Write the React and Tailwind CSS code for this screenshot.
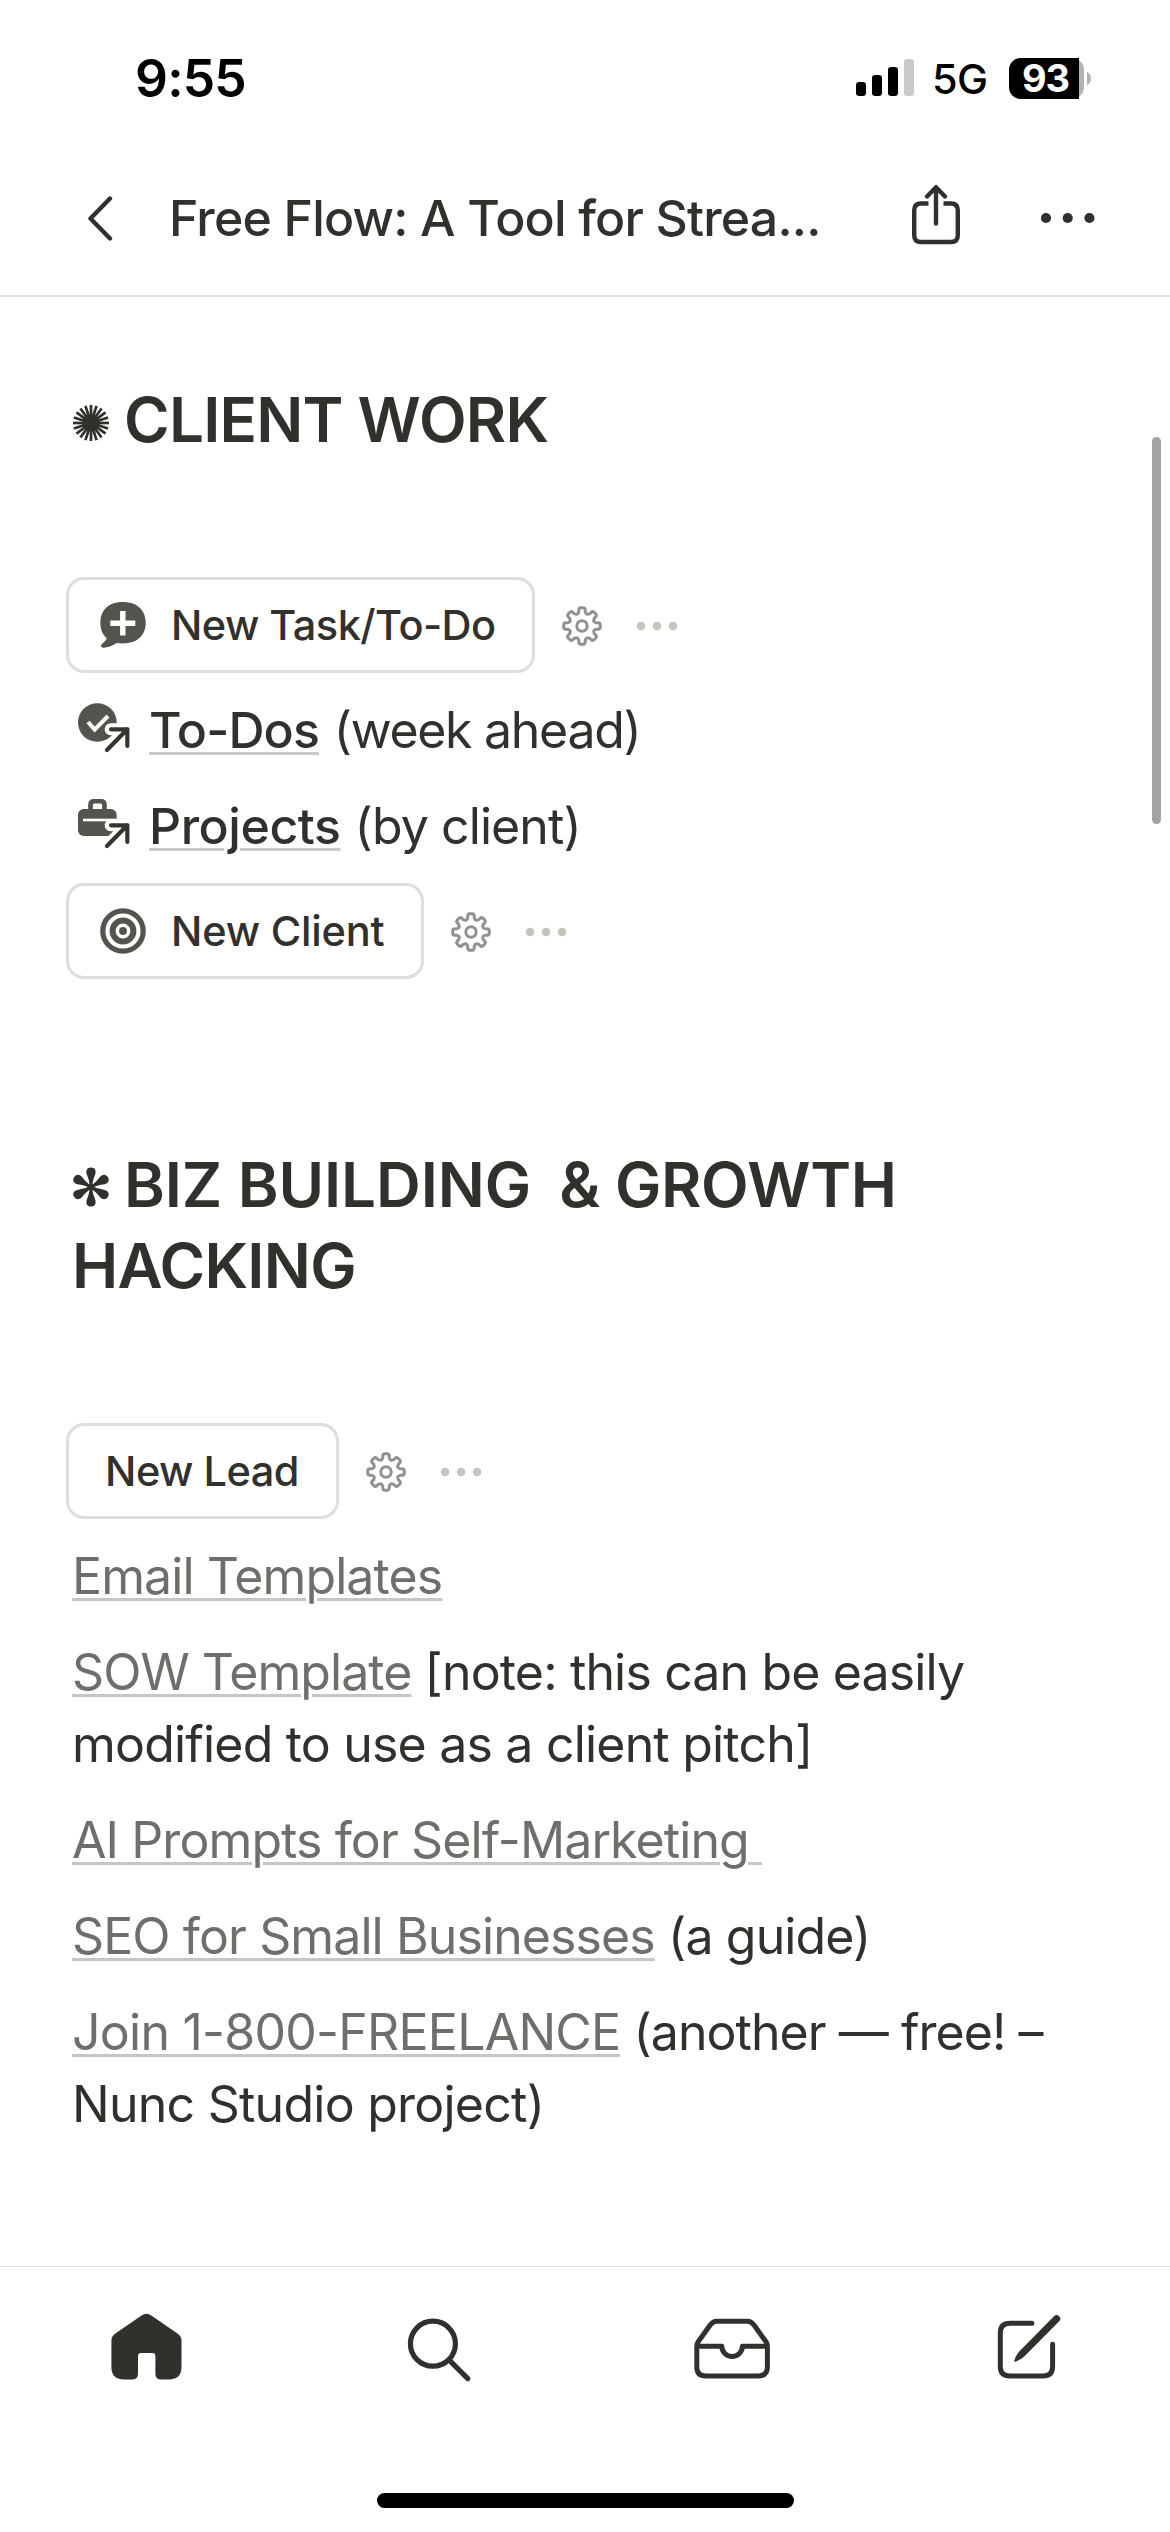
import React from 'react';

const StatusBar = () => (
    <div className="h-[156px] shrink-0 flex items-center justify-between pl-[135px] pr-[79px] text-black">
        <span className="text-[51.5px] leading-none font-semibold tracking-[-0.8px] mt-[2px]">9:55</span>
        <div className="flex items-center">
            <svg width="58" height="38" viewBox="0 0 58 38" className="mr-[18px]">
                <rect x="0" y="23" width="10" height="14" rx="3.2" />
                <rect x="16" y="16" width="10" height="21" rx="3.2" />
                <rect x="32" y="8" width="10" height="29" rx="3.2" />
                <rect x="48" y="0" width="10" height="37" rx="3.2" fill="#cacaca" />
            </svg>
            <span className="text-[41.5px] leading-none font-medium tracking-[-0.6px] mt-[3px] w-[60px]">5G</span>
            <div className="flex items-center ml-[17px]">
                <div className="w-[75px] h-[41px] rounded-[12px] flex items-center bg-[#b3b3b3]">
                    <div className="w-[70px] h-[41px] rounded-l-[12px] bg-black text-white text-[38px] leading-[41px] font-bold tracking-[-1px] text-center pl-[3px]">93</div>
                </div>
                <svg width="4" height="13" viewBox="0 0 4 13" className="ml-[3px]">
                    <path d="M0 0C2.6 1.2 4 3.6 4 6.5S2.6 11.8 0 13Z" fill="#b3b3b3" />
                </svg>
            </div>
        </div>
    </div>
);

const Header = () => (
    <div className="h-[141px] shrink-0 flex items-center pb-[15px] border-b-2 border-[#e3e4df] pl-[86px]">
        <svg width="28" height="46" viewBox="0 0 28 46" fill="none" stroke="#32302c" strokeWidth="4.4" strokeLinecap="round" strokeLinejoin="round">
            <path d="M24 3.5L4.5 23.5L24 43.5" />
        </svg>
        <h1 className="ml-[55px] w-[660px] text-[50px] leading-[60px] font-medium tracking-[-0.81px] whitespace-nowrap">Free Flow: A Tool for Strea...</h1>
        <svg width="52" height="62" viewBox="0 0 52 62" className="ml-[81px] -mt-[7px]" fill="none" stroke="#32302c" strokeWidth="4.4" strokeLinecap="round" strokeLinejoin="round">
            <path d="M18.5 19.5H11Q4.2 19.5 4.2 26.3V51.2Q4.2 58 11 58H41Q47.8 58 47.8 51.2V26.3Q47.8 19.5 41 19.5H33.5" strokeLinecap="butt" />
            <path d="M26 39.5V3.5M17 12.5L26 3.2L35 12.5" />
        </svg>
        <svg width="56" height="12" viewBox="0 0 56 12" className="ml-[78px]" fill="#32302c">
            <circle cx="6" cy="6" r="5.1" />
            <circle cx="27.7" cy="6" r="5.1" />
            <circle cx="49.4" cy="6" r="5.1" />
        </svg>
    </div>
);

const point = (radius, deg) => {
    const a = (deg * Math.PI) / 180;
    return `${(20 + radius * Math.sin(a)).toFixed(2)} ${(20 - radius * Math.cos(a)).toFixed(2)}`;
};

const gearPath = Array.from({ length: 8 }, (_, i) => {
    const a = i * 45;
    return `${i ? 'L' : 'M'}${point(16.4, a - 11)}Q${point(18.2, a - 10)} ${point(18.3, a - 5)}L${point(18.3, a + 5)}Q${point(18.2, a + 10)} ${point(16.4, a + 11)}L${point(14.4, a + 13.5)}Q${point(11.4, a + 22.5)} ${point(14.4, a + 31.5)}`;
}).join('') + 'Z';

const Gear = () => (
    <svg width="40" height="40" viewBox="0 0 40 40" fill="none" stroke="#91918e" strokeWidth="3" strokeLinejoin="round">
        <path d={gearPath} />
        <circle cx="20" cy="20" r="5.2" />
    </svg>
);

const BubbleIcon = () => (
    <svg width="46" height="46" viewBox="0 0 46 46">
        <path d="M22.8 0C37.5 0 45.7 8.5 45.7 20.8C45.7 33.2 37.5 41.5 22.8 41.5C20.6 41.5 18.6 41.3 16.8 41C13 43.6 8 45.8 3.2 45.7C.8 45.6.3 43.4 2 42C4.3 40.2 6.2 38 6.8 36.3C2.5 32.8.4 27.5.4 20.8C.4 8.5 8.2 0 22.8 0Z" fill="#55534e" />
        <path d="M22.8 9V33.4M10.3 21.2H35.3" stroke="#fff" strokeWidth="5.4" />
    </svg>
);

const TargetIcon = () => (
    <svg width="46" height="46" viewBox="0 0 46 46" fill="none" stroke="#55534e">
        <circle cx="23" cy="23" r="20.2" strokeWidth="5.2" />
        <circle cx="23" cy="23" r="10.4" strokeWidth="6" />
        <circle cx="23" cy="23" r="3.9" fill="#55534e" stroke="none" />
    </svg>
);

const LinkArrow = () => (
    <g fill="none" strokeLinecap="round" strokeLinejoin="round">
        <path d="M98 79H149V128M149 79L86 142" stroke="#fff" strokeWidth="36" />
        <path d="M99 79H148V129M148 79L87 141" stroke="#373530" strokeWidth="12.5" />
    </g>
);

const CheckIcon = () => (
    <svg width="52" height="50" viewBox="0 0 156 150" className="shrink-0 mt-[9px] ml-[6px] mr-[19px]">
        <circle cx="58" cy="58.5" r="58" fill="#55534e" />
        <path d="M30 57L50 80L90 39" fill="none" stroke="#fff" strokeWidth="12" />
        <LinkArrow />
    </svg>
);

const BriefcaseIcon = () => (
    <svg width="52" height="50" viewBox="0 0 156 150" className="shrink-0 mt-[9px] ml-[6px] mr-[19px]">
        <path d="M37.5 33V18Q37.5 6.5 49 6.5H68Q79.5 6.5 79.5 18V33" fill="none" stroke="#55534e" strokeWidth="14" />
        <rect x="0" y="30" width="116" height="81" rx="17" fill="#55534e" />
        <rect x="15" y="59" width="101" height="8" fill="#fff" />
        <LinkArrow />
    </svg>
);

const Sunburst = () => (
    <svg width="38" height="38" viewBox="-19 -19 38 38" className="inline-block align-baseline">
        <circle r="8.5" fill="#32302c" />
        {Array.from({ length: 20 }, (_, i) => (
            <path key={i} d="M0 -5V-18" stroke="#32302c" strokeWidth="2.7" transform={`rotate(${i * 18})`} />
        ))}
    </svg>
);

const Asterisk = () => (
    <svg width="38" height="40" viewBox="-19 -20 38 40" className="inline-block align-baseline">
        {[0, 60, 120, 180, 240, 300].map((deg) => (
            <path key={deg} d="M-1.3 0C-1.5 -5 -2.2 -7.5 -3.8 -11.5C-5.8 -16.4 -4 -19.6 0 -19.6S5.8 -16.4 3.8 -11.5C2.2 -7.5 1.5 -5 1.3 0Z" fill="#32302c" transform={`rotate(${deg})`} />
        ))}
        <circle r="2.8" fill="#32302c" />
    </svg>
);

const ActionRow = ({ label, icon, className }) => (
    <div className="flex items-center -ml-[6px] h-[96px]">
        <button className={`h-[96px] flex items-center gap-[25px] border-[3px] border-[#dededd] rounded-[18px] text-[41.5px] leading-none font-medium whitespace-nowrap ${className}`}>
            {icon}
            <span className="mt-[2px]">{label}</span>
        </button>
        <div className="ml-[27px] mt-[2px] flex items-center gap-[34px]">
            <Gear />
            <svg width="42" height="10" viewBox="0 0 42 10" fill="#c7c4be">
                <circle cx="5" cy="5" r="4.3" />
                <circle cx="21" cy="5" r="4.3" />
                <circle cx="37" cy="5" r="4.3" />
            </svg>
        </div>
    </div>
);

const underline = 'underline decoration-[3px] underline-offset-[4px]';

const PageLink = ({ children, className = 'tracking-[-0.9px]' }) => (
    <a className={`${underline} text-[#6f6e6b] decoration-[#c6c6c5] whitespace-pre ${className}`}>{children}</a>
);

const TabBar = () => (
    <nav className="h-[266px] shrink-0 border-t border-[#e3e4df] flex flex-col items-center">
        <div className="grid grid-cols-4 w-full justify-items-center pt-[33px]">
            <svg width="96" height="96" viewBox="0 0 96 96" fill="#32302c">
                <path d="M43.5 15.4Q48.4 12.2 53.3 15.4L79.8 33.7Q83.5 36.3 83.5 40.5V67Q83.5 79.4 71 79.4H62.5Q57.4 79.4 57.4 74V56Q57.4 53 54.4 53H43Q40 53 40 56V74Q40 79.4 34.6 79.4H26Q13.4 79.4 13.4 67V40.5Q13.4 36.3 17 33.7Z" />
            </svg>
            <svg width="96" height="96" viewBox="0 0 96 96" fill="none" stroke="#32302c" strokeWidth="5.2" strokeLinecap="round">
                <circle cx="41.9" cy="43.7" r="22.5" />
                <path d="M59 60.8L76.8 78.6" />
            </svg>
            <svg width="96" height="96" viewBox="0 0 96 96" fill="none" stroke="#32302c" strokeWidth="5" strokeLinejoin="round">
                <path d="M13.8 46V67Q13.8 76 23 76H75Q84.4 76 84.4 67V46Q84.4 43.8 83 41.8L71 25Q68.3 21.3 64.5 21.3H33.5Q30 21.3 27.2 25L15.2 41.8Q13.8 43.8 13.8 46Z" />
                <path d="M13.8 46.3H38.8A10.3 10.3 0 0 0 59.4 46.3H84.4" />
            </svg>
            <svg width="96" height="96" viewBox="0 0 96 96" fill="none" stroke="#32302c" strokeWidth="5" strokeLinecap="round">
                <path d="M55.9 23.3H34Q24.3 23.3 24.3 33V66.5Q24.3 76 34 76H67Q76.6 76 76.6 66.5V44.3" />
                <path d="M78 16.3A3.5 3.5 0 0 1 83.2 21.3L48.5 56.2Q45 59.7 39.2 61.8Q38 62 38.3 60.8Q40 54.8 43.5 51.3Z" fill="#32302c" stroke="none" />
            </svg>
        </div>
        <div className="mt-[97px] w-[417px] h-[15px] rounded-full bg-black" />
    </nav>
);

const App = () => {
    return (
        <div className="w-[1170px] h-[2532px] bg-white text-[#32302c] font-['Inter',sans-serif] flex flex-col overflow-hidden">
            <StatusBar />
            <Header />
            <main className="relative flex-1 pt-[82px] px-[72px] text-[50px] leading-[72px] whitespace-nowrap">
                <h2 className="text-[62px] leading-[81px] font-semibold tracking-[-0.8px] flex items-baseline">
                    <Sunburst />
                    <span className="ml-[14px]">CLIENT WORK</span>
                </h2>
                <div className="mt-[117px]">
                    <ActionRow label="New Task/To-Do" icon={<BubbleIcon />} className="w-[469px] pl-[31px] tracking-[-0.55px]" />
                </div>
                <div className="flex mt-[21px]">
                    <CheckIcon />
                    <p>
                        <a className={`${underline} font-medium decoration-[#c9c9c8] tracking-[-0.88px]`}>To-Dos</a>
                        <span className="ml-[2px] tracking-[-1.3px]"> (week ahead)</span>
                    </p>
                </div>
                <div className="flex mt-6">
                    <BriefcaseIcon />
                    <p>
                        <a className={`${underline} font-medium decoration-[#c9c9c8] tracking-[-0.45px]`}>Projects</a>
                        <span className="ml-[1px] tracking-[-0.9px]"> (by client)</span>
                    </p>
                </div>
                <div className="mt-[21px]">
                    <ActionRow label="New Client" icon={<TargetIcon />} className="w-[358px] pl-[31px] tracking-[-0.2px]" />
                </div>

                <h2 className="mt-[165px] text-[62px] leading-[81px] font-semibold">
                    <span className="flex items-baseline">
                        <Asterisk />
                        <span className="ml-[14px]">
                            <span className="tracking-[-0.1px]">BIZ BUILDING</span>
                            <span className="tracking-[-1.6px]">{'\u00a0 '}</span>
                            <span className="tracking-[-0.4px]">&amp; GROWTH</span>
                        </span>
                    </span>
                    <span className="block tracking-[-0.7px]">HACKING</span>
                </h2>
                <div className="mt-[117px]">
                    <ActionRow label="New Lead" className="w-[273px] pl-[36px] tracking-[-0.5px]" />
                </div>
                <div className="mt-[21px] space-y-6 tracking-[-0.85px]">
                    <p><PageLink>Email Templates</PageLink></p>
                    <p>
                        <PageLink className="tracking-[-0.95px]">SOW Template</PageLink> [note: this can be easily<br />
                        <span className="tracking-[-0.8px]">modified to use as a client pitch]</span>
                    </p>
                    <p><PageLink>{'AI Prompts for Self-Marketing '}</PageLink></p>
                    <p><PageLink>SEO for Small Businesses</PageLink> (a guide)</p>
                    <p>
                        <PageLink className="tracking-[-0.75px]">Join 1-800-FREELANCE</PageLink>
                        <span className="tracking-[-0.95px]"> (another — free! –</span><br />
                        <span className="tracking-[-0.75px]">Nunc Studio project)</span>
                    </p>
                </div>
                <div className="absolute top-[140px] right-[9px] w-[9px] h-[387px] rounded-full bg-[#a3a3a3]" />
            </main>
            <TabBar />
        </div>
    );
};

export default App;
